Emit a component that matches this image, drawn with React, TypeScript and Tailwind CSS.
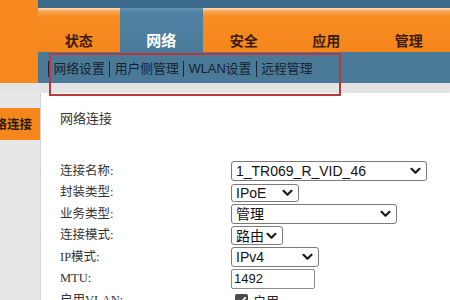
import React from "react";

const cjk = '"Noto Sans CJK SC", "Liberation Sans", sans-serif';

function Chevron() {
  return (
    <svg width="11" height="8" viewBox="0 0 11 8" className="shrink-0">
      <path d="M1.5 1.8 L5.5 5.8 L9.5 1.8" fill="none" stroke="#1a1a1a" strokeWidth="2.2" strokeLinecap="round" strokeLinejoin="round" />
    </svg>
  );
}

function Sel({ w, h, text }: { w: number; h: number; text: string }) {
  return (
    <div
      className="flex items-center justify-between border border-[#7a7a7a] rounded-[3px] bg-white pl-[4px] pr-[5px] text-[14px] text-[#111] leading-none"
      style={{ width: w, height: h, fontFamily: '"Liberation Sans", "Noto Sans CJK SC", sans-serif' }}
    >
      <span className="whitespace-nowrap">{text}</span>
      <Chevron />
    </div>
  );
}

export default function App() {
  const tabs = ["状态", "网络", "安全", "应用", "管理"];
  const subs = ["网络设置", "用户侧管理", "WLAN设置", "远程管理"];
  const rows: { label: string; ctrl: React.ReactNode }[] = [
    { label: "连接名称:", ctrl: <Sel w={196} h={20} text="1_TR069_R_VID_46" /> },
    { label: "封装类型:", ctrl: <Sel w={68} h={18} text="IPoE" /> },
    { label: "业务类型:", ctrl: <Sel w={166} h={20} text="管理" /> },
    { label: "连接模式:", ctrl: <Sel w={52} h={19} text="路由" /> },
    { label: "IP模式:", ctrl: <Sel w={88} h={20} text="IPv4" /> },
    {
      label: "MTU:",
      ctrl: (
        <div
          className="flex items-center border border-[#8a8a8a] rounded-[2px] bg-white pl-[2px] text-[13px] text-[#111] w-[84px] h-[20px]"
          style={{ fontFamily: '"Liberation Sans", sans-serif' }}
        >
          1492
        </div>
      ),
    },
    {
      label: "启用VLAN:",
      ctrl: (
        <div className="flex items-center gap-[5px] pl-[4px] text-[13px] text-[#222]" style={{ fontFamily: cjk }}>
          <span className="w-[13px] h-[13px] rounded-[2px] bg-[#4a4a4a] flex items-center justify-center">
            <svg width="10" height="10" viewBox="0 0 10 10">
              <path d="M1.5 5.2 L4 7.6 L8.6 2.4" fill="none" stroke="white" strokeWidth="1.8" />
            </svg>
          </span>
          启用
        </div>
      ),
    },
  ];

  return (
    <div className="relative w-[450px] h-[300px] overflow-hidden bg-white" style={{ fontFamily: cjk }}>
      {/* Header */}
      <div className="flex h-[83px]">
        <div className="w-[42px] bg-[#f7891f]" />
        <div className="flex-1 flex flex-col">
          <div className="h-[8px] bg-[#3b6a8c]" />
          <div className="h-[44px] flex">
            {tabs.map((t, i) =>
              i === 1 ? (
                <div
                  key={t}
                  className="w-[82.5px] shrink-0 flex items-center justify-center pt-[20px] bg-[linear-gradient(to_bottom,#6a93b0_0px,#5283a4_4px,#4b7b9a_100%)] text-white font-bold text-[15px]"
                >
                  {t}
                </div>
              ) : (
                <div
                  key={t}
                  className="w-[82.5px] shrink-0 flex items-center justify-center pt-[20px] bg-[linear-gradient(to_bottom,#fde3c6_0px,#f9a655_3px,#f68c22_9px,#f5861c_100%)] text-[#3a1c0c] font-bold text-[14px]"
                >
                  {t}
                </div>
              )
            )}
          </div>
          <div className="h-[31px] bg-[#4b7a99] flex items-center pt-[3px] pl-[10.5px] text-[12.8px] text-[#16222e]">
            {subs.map((s) => (
              <React.Fragment key={s}>
                <span className="w-[1px] h-[16px] bg-[#1a2835]" />
                <span className="px-[4.5px] whitespace-nowrap" style={{ fontFamily: '"Liberation Sans", "Noto Sans CJK SC", sans-serif' }}>
                  {s}
                </span>
              </React.Fragment>
            ))}
          </div>
        </div>
      </div>
      <div className="h-[10px] bg-[#e4e4e4]" />
      {/* Body */}
      <div className="flex h-[207px]">
        <div className="w-[40px] shrink-0 bg-[#e7e7e7] pt-[15px]">
          <div className="h-[32px] bg-[#f5861c] flex items-center justify-end pr-[8px] overflow-hidden">
            <span className="whitespace-nowrap font-bold text-[12.5px] text-[#2a1a0c]">网络连接</span>
          </div>
        </div>
        <div className="flex-1 border-l border-[#d4d4d4] pl-[19px] pt-[17px]">
          <div className="text-[13px] leading-[16px] text-[#333]">网络连接</div>
          <div className="mt-[34.5px] flex flex-col">
            {rows.map((r) => (
              <div key={r.label} className="h-[21.5px] flex items-center">
                <div
                  className="w-[171px] shrink-0 text-[12.5px] text-[#333]"
                  style={{ fontFamily: '"Liberation Serif", "Noto Sans CJK SC", serif' }}
                >
                  {r.label}
                </div>
                {r.ctrl}
              </div>
            ))}
          </div>
        </div>
      </div>
      {/* Red highlight box */}
      <div className="absolute left-[49px] top-[53px] w-[292px] h-[43px] border-2 border-[#b8383c] pointer-events-none" />
    </div>
  );
}
